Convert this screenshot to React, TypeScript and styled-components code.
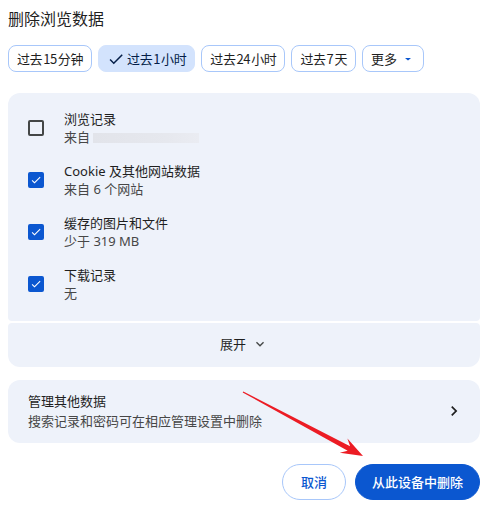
import styled, { createGlobalStyle } from "styled-components";

const GlobalStyle = createGlobalStyle`
  html, body {
    margin: 0;
    background: #ffffff;
  }
  body {
    font-family: "Noto Sans", "Noto Sans CJK SC", sans-serif;
    color: #1f1f1f;
    -webkit-font-smoothing: antialiased;
  }
`;

const ranges = ["过去 15 分钟", "过去 1 小时", "过去 24 小时", "过去 7 天"];
const selectedRange = "过去 1 小时";

type Item = { label: string; detail: string; checked: boolean; redacted?: boolean };

const items: Item[] = [
  { label: "浏览记录", detail: "来自", checked: false, redacted: true },
  { label: "Cookie 及其他网站数据", detail: "来自 6 个网站", checked: true },
  { label: "缓存的图片和文件", detail: "少于 319 MB", checked: true },
  { label: "下载记录", detail: "无", checked: true },
];

const CheckIcon = ({ size, color }: { size: number; color: string }) => (
  <svg width={size} height={size} viewBox="0 0 24 24" fill={color}>
    <path d="M9 16.17L4.83 12l-1.42 1.41L9 19 21 7l-1.41-1.41z" />
  </svg>
);

export default function App() {
  return (
    <Page>
      <GlobalStyle />
      <Title>删除浏览数据</Title>

      <ChipRow>
        {ranges.map((r) => (
          <Chip key={r} $selected={r === selectedRange}>
            {r === selectedRange && <CheckIcon size={18} color="#041e49" />}
            {r}
          </Chip>
        ))}
        <Chip $selected={false} $menu>
          更多
          <svg width="18" height="18" viewBox="0 0 24 24" fill="#0b57d0">
            <path d="M8 10.5l4 3.5 4-3.5z" />
          </svg>
        </Chip>
      </ChipRow>

      <DataPanel>
        {items.map((item) => (
          <DataRow key={item.label}>
            <Checkbox $checked={item.checked}>
              {item.checked && <CheckIcon size={14} color="#ffffff" />}
            </Checkbox>
            <RowText>
              <Label>{item.label}</Label>
              <Detail>
                {item.detail}
                {item.redacted && <Redacted />}
              </Detail>
            </RowText>
          </DataRow>
        ))}
      </DataPanel>

      <ExpandBar>
        展开
        <svg width="16" height="16" viewBox="0 0 24 24" fill="#444746">
          <path d="M16.59 8.59L12 13.17 7.41 8.59 6 10l6 6 6-6z" />
        </svg>
      </ExpandBar>

      <ManagePanel>
        <div>
          <ManageLabel>管理其他数据</ManageLabel>
          <ManageDetail>搜索记录和密码可在相应管理设置中删除</ManageDetail>
        </div>
        <svg width="20" height="20" viewBox="0 0 24 24" fill="#1f1f1f">
          <path d="M10 6L8.59 7.41 13.17 12l-4.58 4.59L10 18l6-6z" />
        </svg>
      </ManagePanel>

      <ButtonRow>
        <OutlineButton>取消</OutlineButton>
        <FilledButton>从此设备中删除</FilledButton>
      </ButtonRow>

      <Annotation width="488" height="516" viewBox="0 0 488 516">
        <polygon
          points="243.3,391.5 350.1,446.3 347.4,438.6 363,456 339.8,452.8 347.7,450.7 242.7,392.5"
          fill="#ec1c24"
        />
      </Annotation>
    </Page>
  );
}

const Page = styled.div`
  position: relative;
  width: 488px;
  height: 516px;
  box-sizing: border-box;
  padding: 8px;
  overflow: hidden;
`;

const Title = styled.h1`
  margin: 0;
  font-size: 16px;
  line-height: 22px;
  font-weight: 400;
  color: #1f1f1f;
`;

const ChipRow = styled.div`
  display: flex;
  gap: 6px;
  margin-top: 15px;
`;

const Chip = styled.button<{ $selected: boolean; $menu?: boolean }>`
  display: inline-flex;
  align-items: center;
  gap: 2px;
  height: 27px;
  box-sizing: border-box;
  padding: ${({ $menu }) => ($menu ? "0 6px 0 8px" : "0 8px")};
  border-radius: 8px;
  border: 1px solid ${({ $selected }) => ($selected ? "#d3e3fd" : "#a8c7fa")};
  background: ${({ $selected }) => ($selected ? "#d3e3fd" : "#ffffff")};
  color: ${({ $selected }) => ($selected ? "#041e49" : "#1f1f1f")};
  font-family: "Noto Sans CJK SC", "Noto Sans", sans-serif;
  font-size: 13px;
  line-height: 18px;
  letter-spacing: ${({ $menu }) => ($menu ? "0" : "-0.4px")};
  word-spacing: -1.5px;
  white-space: nowrap;
`;

const DataPanel = styled.div`
  display: flex;
  flex-direction: column;
  gap: 16px;
  margin-top: 21px;
  padding: 17px 20px 19px;
  background: #eef2fa;
  border-radius: 12px 12px 4px 4px;
`;

const DataRow = styled.div`
  display: grid;
  grid-template-columns: 16px 1fr;
  column-gap: 20px;
  align-items: center;
`;

const Checkbox = styled.span<{ $checked: boolean }>`
  display: flex;
  align-items: center;
  justify-content: center;
  width: 16px;
  height: 16px;
  box-sizing: border-box;
  border-radius: 2px;
  border: 2px solid ${({ $checked }) => ($checked ? "#0b57d0" : "#444746")};
  background: ${({ $checked }) => ($checked ? "#0b57d0" : "transparent")};
`;

const RowText = styled.div`
  display: flex;
  flex-direction: column;
`;

const Label = styled.span`
  font-size: 13px;
  line-height: 18px;
  color: #1f1f1f;
`;

const Detail = styled.span`
  display: flex;
  align-items: center;
  gap: 3px;
  font-size: 13px;
  line-height: 18px;
  color: #474747;
`;

const Redacted = styled.span`
  display: inline-block;
  width: 106px;
  height: 10px;
  margin-top: 1px;
  background: linear-gradient(90deg, #e2e4ea, #e6e8ee 70%, #eaecf2);
`;

const ExpandBar = styled.div`
  display: flex;
  align-items: center;
  justify-content: center;
  gap: 6px;
  height: 44px;
  margin-top: 2px;
  background: #eef2fa;
  border-radius: 4px 4px 12px 12px;
  font-size: 13px;
  line-height: 18px;
  color: #1f1f1f;
  padding-bottom: 3px;
  box-sizing: border-box;
`;

const ManagePanel = styled.div`
  display: flex;
  align-items: center;
  justify-content: space-between;
  margin-top: 13px;
  padding: 11px 16px 12px 20px;
  background: #eef2fa;
  border-radius: 12px;
`;

const ManageLabel = styled.div`
  font-size: 13px;
  line-height: 20px;
  color: #1f1f1f;
`;

const ManageDetail = styled.div`
  font-size: 13px;
  line-height: 20px;
  color: #474747;
`;

const ButtonRow = styled.div`
  display: flex;
  justify-content: flex-end;
  gap: 9px;
  margin-top: 21px;
`;

const BaseButton = styled.button`
  height: 36px;
  box-sizing: border-box;
  border-radius: 18px;
  font-family: inherit;
  font-size: 13px;
  font-weight: 500;
  line-height: 18px;
  white-space: nowrap;
`;

const OutlineButton = styled(BaseButton)`
  padding: 0 18px;
  border: 1px solid #a8c7fa;
  background: #ffffff;
  color: #0b57d0;
`;

const FilledButton = styled(BaseButton)`
  padding: 0 16px;
  border: 1px solid #0b57d0;
  background: #0b57d0;
  color: #ffffff;
`;

const Annotation = styled.svg`
  position: absolute;
  top: 0;
  left: 0;
  pointer-events: none;
`;
